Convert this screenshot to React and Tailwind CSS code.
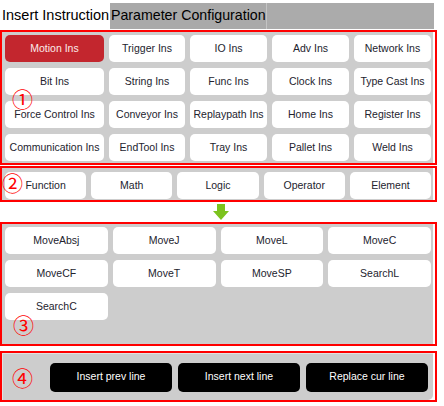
import React from "react";

const row1 = [
  ["Motion Ins", true], ["Trigger Ins"], ["IO Ins"], ["Adv Ins"], ["Network Ins"],
  ["Bit Ins"], ["String Ins"], ["Func Ins"], ["Clock Ins"], ["Type Cast Ins"],
  ["Force Control Ins"], ["Conveyor Ins"], ["Replaypath Ins"], ["Home Ins"], ["Register Ins"],
  ["Communication Ins"], ["EndTool Ins"], ["Tray Ins"], ["Pallet Ins"], ["Weld Ins"],
];
const cats = ["Function", "Math", "Logic", "Operator", "Element"];
const moves = ["MoveAbsj", "MoveJ", "MoveL", "MoveC", "MoveCF", "MoveT", "MoveSP", "SearchL", "SearchC"];

function Btn({ label, active }) {
  return (
    <div
      className={
        "flex items-center justify-center rounded-[5px] text-[10.5px] whitespace-nowrap " +
        (active ? "bg-[#c3262e] text-[#fbeaea]" : "bg-white text-[#23232e]")
      }
    >
      {label}
    </div>
  );
}

function Num({ children, className }) {
  return (
    <span
      className={
        "absolute text-[#ff0000] text-[21px] leading-none font-['Noto_Sans_CJK_SC',sans-serif] pointer-events-none " +
        className
      }
    >
      {children}
    </span>
  );
}

export default function App() {
  return (
    <div className="w-[437px] bg-white font-['Liberation_Sans',Arial,sans-serif]">
      {/* tabs */}
      <div className="flex h-[30px] pt-[3px] pb-px pr-[3px]">
        <div className="w-[110px] bg-white text-[14.5px] text-black pl-[2px] flex items-center">
          Insert Instruction
        </div>
        <div className="w-[157px] bg-[#a9a9a9] text-[14.2px] text-black pl-px flex items-center whitespace-nowrap border-r border-[#c4c4c4]">
          Parameter Configuration
        </div>
        <div className="flex-1 bg-[#ababab]" />
      </div>

      {/* box 1 */}
      <div className="relative border-2 border-[#ff0000]">
        <div className="bg-[#cdcdcd] mr-[2px] pl-[3px] pr-[2px] pt-[3px] pb-[2px] grid grid-cols-[99px_76px_77px_77px_77px] gap-x-[5px] gap-y-[6px] auto-rows-[27px]">
          {row1.map(([l, a]) => (
            <Btn key={l} label={l} active={a} />
          ))}
        </div>
        <Num className="left-[10px] top-[56px]">①</Num>
      </div>

      {/* box 2 */}
      <div className="relative mt-px border-2 border-[#ff0000]">
        <div className="bg-[#cdcdcd] mr-[2px] pl-[3px] pr-[2px] pt-[4px] pb-px grid grid-cols-5 gap-x-[5px] auto-rows-[27px]">
          {cats.map((l) => (
            <Btn key={l} label={l} />
          ))}
        </div>
        <Num className="left-[0px] top-[4px]">②</Num>
      </div>

      {/* arrow */}
      <div className="h-[20px] flex justify-center items-center pl-[5px]">
        <svg width="16" height="16" viewBox="0 0 16 16">
          <path d="M4 0 H12 V7 H16 L8 16 L0 7 H4 Z" fill="#7cc31e" />
        </svg>
      </div>

      {/* box 3 */}
      <div className="relative h-[124px] border-2 border-[#ff0000]">
        <div className="h-full bg-[#cdcdcd] mr-[2px] pl-[3px] pr-[2px] pt-[3px]">
          <div className="grid grid-cols-4 gap-x-[5px] gap-y-[6px] auto-rows-[27px]">
            {moves.map((l) => (
              <Btn key={l} label={l} />
            ))}
          </div>
        </div>
        <Num className="left-[11px] top-[90px]">③</Num>
      </div>

      {/* box 4 */}
      <div className="mt-[5px] h-[51px] border-2 border-[#ff0000]">
        <div className="h-full mr-[2px] bg-[#cdcdcd] border-t border-l border-[#e2e2e2] rounded-br-[5px] flex items-center pr-[5px]">
          <span className="text-[#ff0000] text-[21px] leading-none font-['Noto_Sans_CJK_SC',sans-serif] ml-[9px]">④</span>
          <div className="ml-auto flex gap-[6px]">
            {["Insert prev line", "Insert next line", "Replace cur line"].map((l) => (
              <div
                key={l}
                className="w-[122px] h-[29px] rounded-[5px] bg-black text-white text-[10.5px] flex items-center justify-center"
              >
                {l}
              </div>
            ))}
          </div>
        </div>
      </div>
    </div>
  );
}
